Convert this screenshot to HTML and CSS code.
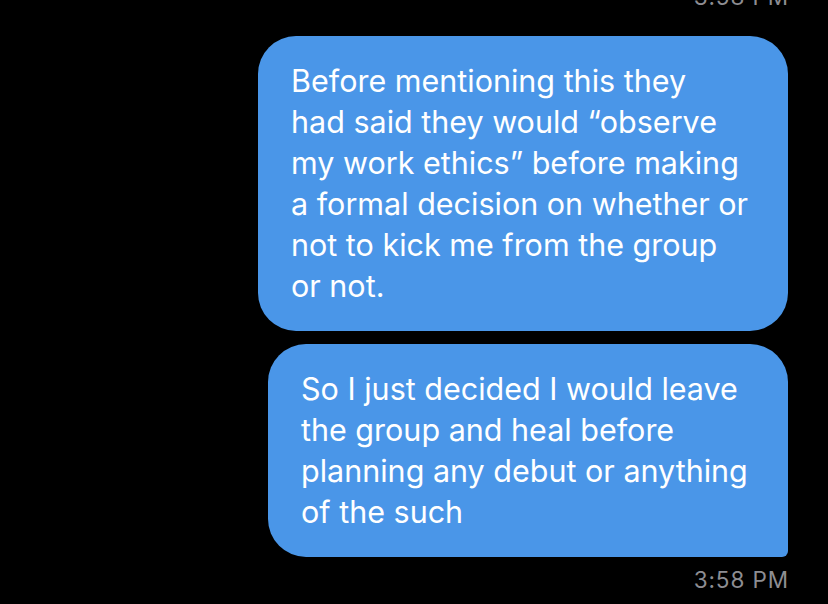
FILE: index.html
```html
<!DOCTYPE html>
<html>
<head>
<meta charset="utf-8">
<link rel="stylesheet" href="styles.css">
</head>
<body>
<div class="thread">
  <div class="time time-top">3:58 PM</div>
  <div class="bubble bubble-one">Before mentioning this they<br>had said they would “observe<br>my work ethics” before making<br>a formal decision on whether or<br>not to kick me from the group<br>or not.</div>
  <div class="bubble bubble-two">So I just decided I would leave<br>the group and heal before<br>planning any debut or anything<br>of the such</div>
  <div class="time time-bottom">3:58 PM</div>
</div>
</body>
</html>
```

FILE: styles.css
```css
html, body {
  margin: 0;
  padding: 0;
  background: #000;
  height: 100%;
  overflow: hidden;
}
.thread {
  display: flex;
  flex-direction: column;
  align-items: flex-end;
  padding-right: 40px;
  font-family: Inter, "Noto Sans", sans-serif;
}
.time {
  color: #8d8d92;
  font-size: 22.5px;
  line-height: 26px;
  letter-spacing: 0.9px;
  margin-right: -1px;
}
.time-top {
  margin-top: -16px;
  margin-bottom: 26px;
}
.bubble {
  background: #4a96e8;
  color: #fff;
  font-size: 30.5px;
  line-height: 41px;
  padding: 24px 33px 25px 33px;
  border-radius: 38px;
  box-sizing: border-box;
  white-space: nowrap;
}
.bubble-one {
  width: 530px;
}
.bubble-two {
  width: 520px;
  margin-top: 13px;
  border-bottom-right-radius: 6px;
}
.time-bottom {
  margin-top: 10px;
}
```
